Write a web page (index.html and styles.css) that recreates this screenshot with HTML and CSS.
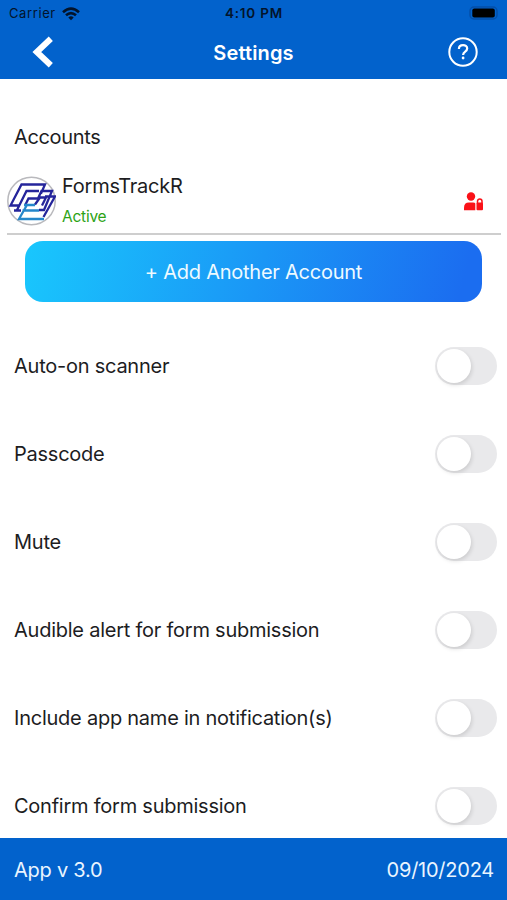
FILE: index.html
```html
<!DOCTYPE html>
<html lang="en">
<head>
<meta charset="utf-8">
<title>Settings</title>
<link rel="stylesheet" href="styles.css">
</head>
<body>
<header class="header">
  <div class="status">
    <div class="carrier"><span>Carrier</span>
      <svg width="18" height="14" viewBox="0 0 18 14" fill="none" stroke="#03142b" stroke-width="2.6"><path d="M1 5.2Q9-1.8 17 5.2M4 8.3Q9 3.8 14 8.3"/><path d="M6.3 10.4Q9 8.3 11.7 10.4L9 13.2Z" fill="#03142b" stroke="none"/></svg>
    </div>
    <div class="time">4:10 PM</div>
    <svg class="battery" width="30" height="15" viewBox="0 0 30 15"><rect x="1" y="1" width="27" height="12" rx="4" fill="none" stroke="#044fa8" stroke-width="1.5"/><rect x="3.3" y="2.6" width="22.500" height="9" rx="2" fill="#000"/></svg>
  </div>
  <div class="nav">
    <svg width="22" height="32" viewBox="0 0 22 32"><path d="M18.800 2.800 4.800 16l14 13.200" fill="none" stroke="#fff" stroke-width="6"/></svg>
    <h1 class="title">Settings</h1>
    <svg width="30" height="30" viewBox="0 0 30 30" fill="none" stroke="#fff"><circle cx="15" cy="15" r="13.700" stroke-width="2"/><path d="M10.900 11.900c0-5.200 8.300-5 8.300-.3 0 3.200-4.100 2.900-4.100 6.300" stroke-width="2.200"/><circle cx="15.100" cy="21" r="1.400" fill="#fff" stroke="none"/></svg>
  </div>
</header>
<main class="content">
  <h2 class="heading">Accounts</h2>
  <section class="account">
    <svg class="avatar" width="49" height="50" viewBox="0 0 49 50" fill="none">
      <circle cx="24.500" cy="25" r="23.700" fill="#fff" stroke="#b9b9bd" stroke-width="1.500"/>
      <g stroke="#25259b" stroke-width="2.300"><path d="M34 17.500 38 8.500H14.500L3.500 29.500H12M32 15H19.500L9.500 35M7 34.500h7M18 29.500l3.500-7H31l3.500-7.500H45L37 34h-5M28 28.500l5-7h6l-4 8M38 20.500h10L36.500 41"/></g>
      <g stroke="#2687ca" stroke-width="2.300"><path d="M17 29h11M15.500 34.500H32M37 43H12L20.500 28"/></g>
    </svg>
    <div class="account-text"><div class="name">FormsTrackR</div><div class="state">Active</div></div>
    <svg class="user-lock" width="20" height="19" viewBox="0 0 20 19" fill="#fa1118"><circle cx="7" cy="4.500" r="4.200"/><path d="M0 18.200v-2.500Q0 10.500 5 10.500h4q2 0 2.300 1v6.700Z"/><rect x="12.500" y="10.500" width="6.500" height="7.700" rx="1"/><path d="M13.500 11.500V9.200a2.250 2.250 0 0 1 4.500 0v2.300" fill="none" stroke="#fa1118" stroke-width="1.500"/></svg>
  </section>
  <button class="add">+ Add Another Account</button>
  <section class="options">
    <label class="option"><span>Auto-on scanner</span><i class="switch"></i></label>
    <label class="option"><span>Passcode</span><i class="switch"></i></label>
    <label class="option"><span>Mute</span><i class="switch"></i></label>
    <label class="option"><span>Audible alert for form submission</span><i class="switch"></i></label>
    <label class="option"><span>Include app name in notification(s)</span><i class="switch"></i></label>
    <label class="option"><span>Confirm form submission</span><i class="switch"></i></label>
  </section>
</main>
<footer class="footer"><span>App v 3.0</span><span class="date">09/10/2024</span></footer>
</body>
</html>
```
FILE: styles.css
```css
* { box-sizing: border-box; }
body { margin: 0; width: 507px; height: 900px; overflow: hidden; display: flex; flex-direction: column; background: #fff; color: #1d1d1f; font: 400 20px/24px Inter, "Liberation Sans", sans-serif; letter-spacing: -.24px; }
svg { display: block; flex: none; }
.header { height: 79px; flex: none; background: #0262cc; }
.status { height: 27px; display: grid; grid-template-columns: 1fr auto 1fr; align-items: center; padding: 0 8px 0 9px; color: #03142b; font-size: 13px; line-height: 27px; }
.carrier { display: flex; align-items: center; gap: 6px; letter-spacing: .6px; }
.time { font-weight: 600; font-size: 13.5px; letter-spacing: .8px; }
.battery { justify-self: end; }
.nav { height: 50px; display: grid; grid-template-columns: 1fr auto 1fr; align-items: center; padding: 0 29px 0 32px; color: #fff; }
.nav svg:last-child { justify-self: end; }
.title { margin: 2px 3px 0 0; font-size: 20px; font-weight: 600; line-height: 24px; letter-spacing: .15px; }
.content { flex: 1; min-height: 0; overflow: hidden; }
.heading { margin: 46px 0 0 14px; font-size: 20px; font-weight: 400; line-height: 25px; letter-spacing: -.35px; }
.account { height: 66px; margin: 19px 6px 0 7px; padding-right: 17px; border-bottom: 2px solid #cecece; display: flex; align-items: center; }
.account-text { flex: 1; margin-left: 6px; }
.name { line-height: 28px; margin-top: 2px; }
.state { color: #2da315; font-size: 15.5px; line-height: 32px; padding-top: 1px; margin-bottom: -1px; }
.add { display: block; width: 457px; height: 61px; margin: 6px 0 0 25px; padding: 0; border: 0; border-radius: 18px; background: linear-gradient(105deg, #19c7fd, #1b6df0 95%); color: #eefaff; font: inherit; letter-spacing: -.24px; }
.options { padding-top: 20px; }
.option { height: 88px; padding: 0 10px 0 14px; display: flex; align-items: center; justify-content: space-between; }
.switch { width: 62px; height: 38px; padding: 2px; border-radius: 19px; background: #e9e9eb; }
.switch::before { content: ""; display: block; width: 34px; height: 34px; border-radius: 50%; background: #fff; box-shadow: 1px 2px 4px rgba(0,0,0,.13); }
.footer { height: 62px; flex: none; display: flex; align-items: center; justify-content: space-between; padding: 2px 13px 0 14px; background: #0262cc; color: #eaf5ff; }
```
